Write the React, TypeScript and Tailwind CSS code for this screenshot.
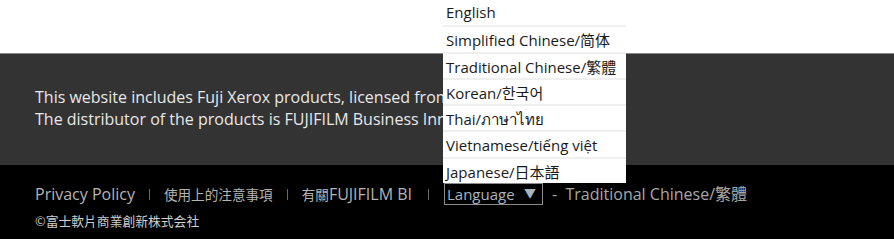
import { useState } from "react";

const LANGUAGES = [
  "English",
  "Simplified Chinese/简体",
  "Traditional Chinese/繁體",
  "Korean/한국어",
  "Thai/ภาษาไทย",
  "Vietnamese/tiếng việt",
  "Japanese/日本語",
];

const FONT = {
  fontFamily:
    '"Open Sans", "Noto Sans CJK TC", "Noto Sans CJK KR", "Noto Sans", sans-serif',
};

const CJK = {
  fontFamily: '"Noto Sans CJK TC", sans-serif',
};

function Divider({ className = "mx-[14px]" }: { className?: string }) {
  return <span className={"inline-block h-[11px] w-px bg-[#6a6a6a] " + className} />;
}

export default function App() {
  const [open] = useState(true);

  return (
    <div className="min-h-[239px] w-full bg-white text-[16px]" style={FONT}>
      <div className="h-[53px]" />

      {/* notice band */}
      <div className="h-[112px] border-t border-[#8a8a8a] bg-[#333] px-[35px] pt-[32px] leading-[22px] text-[#e8e8e8]">
        <p>This website includes Fuji Xerox products, licensed from Xerox Corporation.</p>
        <p>The distributor of the products is FUJIFILM Business Innovation Corp.</p>
      </div>

      {/* footer */}
      <div className="h-[74px] bg-black px-[35px] pt-[18px] text-[#b4b4b4]">
        <div className="flex h-[22px] items-center">
          <span>Privacy Policy</span>
          <Divider />
          <span className="text-[13.6px]" style={CJK}>使用上的注意事項</span>
          <Divider />
          <span>
            <span className="text-[13.6px]" style={CJK}>有關</span>FUJIFILM BI
          </span>
          <Divider className="ml-[16px] mr-[15px]" />
          <div className="relative">
            {open && (
              <ul className="absolute bottom-full -left-px w-[183px] bg-white text-[15px] text-[#1a1a1a]">
                {LANGUAGES.map((lang, i) => (
                  <li
                    key={lang}
                    className={
                      "h-[26.3px] px-[3px] leading-[26px] whitespace-nowrap" +
                      (i > 0 ? " border-t-2 border-[#efefef]" : "")
                    }
                  >
                    {lang}
                  </li>
                ))}
              </ul>
            )}
            <div className="flex h-[22px] w-[99px] items-center border border-[#8c8c8c] pl-[2px] text-[15px] text-[#a9b4be]">
              <span>Language</span>
              <span className="ml-auto mr-[6px] text-[12px]">▼</span>
            </div>
          </div>
          <span className="ml-[9px] text-[#a8a8a8]">-&nbsp; Traditional Chinese/繁體</span>
        </div>
        <div className="mt-[6px] text-[12.8px] leading-[20px] text-[#cfcfcf]" style={CJK}>
          ©富士軟片商業創新株式会社
        </div>
      </div>
    </div>
  );
}
